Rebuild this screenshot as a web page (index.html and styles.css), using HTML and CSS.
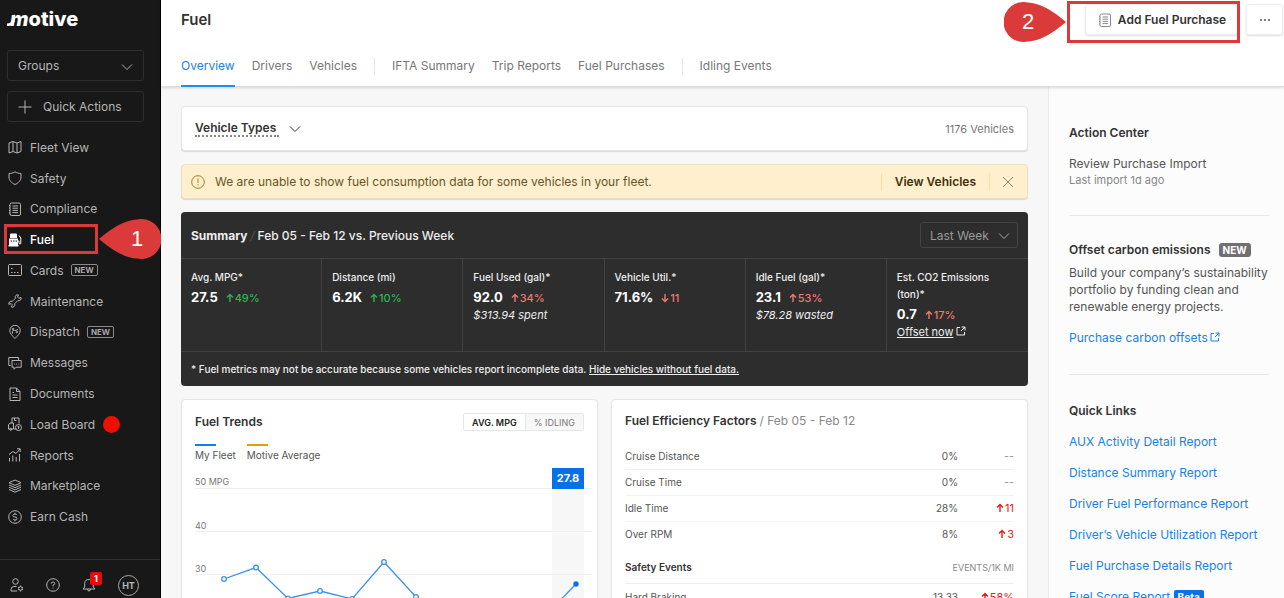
FILE: index.html
```
<!DOCTYPE html>
<html lang="en">

<head>
    <meta charset="UTF-8">
    <meta name="viewport" content="width=device-width, initial-scale=1.0">
    <title>Fuel</title>
    <link rel="stylesheet" href="styles.css">
</head>

<body>
    <svg class="sprite" aria-hidden="true">
        <symbol id="chevron" viewBox="0 0 12 12"><path d="M1 3.500l5 5 5-5" /></symbol>
        <symbol id="up" viewBox="0 0 8 10"><path d="M4 9V1.500M1 4.500l3-3 3 3" /></symbol>
        <symbol id="down" viewBox="0 0 8 10"><path d="M4 1v7.500M1 5.500l3 3 3-3" /></symbol>
        <symbol id="external" viewBox="0 0 10 10"><path d="M4 1.500H1v7.500h7.500V6M5.500 1H9v3.500M9 1L5 5" /></symbol>
        <symbol id="doc" viewBox="0 0 14 14"><rect x="2" y="1" width="10.500" height="12.500" rx="1.500" /><path d="M4.500 4h5.500M4.500 6.200h5.500M4.500 8.400h5.500M4.500 10.600h5.500M1 3.500h1M1 6h1M1 8.500h1M1 11h1" /></symbol>
    </svg>
    <div class="app">
        <div class="sidebar">
            <div class="logo" aria-label="motive">
                <svg class="swoosh" viewBox="0 0 8 14"><path d="M0 11.500c3 0 4-1 5-3L8 2v7c-1.500 3-3.500 5-8 5z" /></svg><em>m</em><span>otive</span>
            </div>
            <label class="picker">
                <select class="groups" aria-label="Groups"><option>Groups</option></select>
                <svg class="chevron"><use href="#chevron" /></svg>
            </label>
            <button class="quick">
                <svg class="icon" viewBox="0 0 14 14"><path d="M7 .5v13M.5 7h13" /></svg>
                Quick Actions
            </button>
            <nav class="menu">
                <a href="#"><svg class="icon" viewBox="0 0 14 14"><path d="M1 3l4-1.500v10L1 13zM5 1.500L9 3v10l-4-1.500M9 3l4-1.500v10L9 13" /></svg>Fleet View</a>
                <a href="#"><svg class="icon" viewBox="0 0 14 14"><path d="M7 .8C5 2 3 2.500 1 2.500V6c0 3.500 2.500 6 6 7.500C10.500 12 13 9.500 13 6V2.500C11 2.500 9 2 7 .8z" /></svg>Safety</a>
                <a href="#"><svg class="icon"><use href="#doc" /></svg>Compliance</a>
                <a class="active" href="#"><svg class="icon" viewBox="0 0 14 14"><path class="solid" d="M2 1.500Q2 .5 3 .5h5q1 0 1 1V5H2z" /><path class="solid" d="M1 5.500h9V12H1zM.5 12h10v1.500H.5z" /><path class="hole" d="M2.500 8h1.500M5 8h1.500M7.500 8H9" /><path d="M10 8h1v2.500q1.200 1 1.800 0V5L11 2.500" /></svg>Fuel
                    <span class="outline"></span>
                    <span class="pin pin-left"><svg viewBox="0 0 62 40"><path d="M0 20Q22 1 38 .5A20 20 0 1 1 38 39.500Q22 39 0 20z" /></svg><b>1</b></span>
                </a>
                <a href="#"><svg class="icon" viewBox="0 0 14 14"><rect x=".5" y="1.500" width="13" height="11" rx="1" /><path d="M3 5.500h1.500M3 9.500h1.500M6 9.500h1.500M9 9.500h1.500" /></svg>Cards <span class="new">NEW</span></a>
                <a href="#"><svg class="icon" viewBox="0 0 14 14"><path d="M13 3.500l-2.200.8-1.200-1.200L10.400.9C8.500.3 6.500 2 7.300 4.300L6.500 5.200 5 6.700 4.300 7.300C2.200 6.600.3 8.500.9 10.400l2.200-.8 1.200 1.200-.8 2.300C5.500 13.700 7.500 12 6.700 9.700l3-3C11.900 7.400 13.700 5.500 13 3.500z" /></svg>Maintenance</a>
                <a href="#"><svg class="icon" viewBox="0 0 14 14"><path d="M7 13.500C4 10.500 1.800 8.500 1.800 5.500a5.200 5.200 0 0 1 10.400 0C12.200 8.500 10 10.500 7 13.500zM4.500 8.500V6.500q0-1.200 1.200-1.200h2.600q1.200 0 1.200-1.300" /><circle cx="5" cy="4" r=".8" /><circle cx="8.800" cy="7" r=".8" /></svg>Dispatch <span class="new">NEW</span></a>
                <a href="#"><svg class="icon" viewBox="0 0 14 14"><path d="M2.800 9.500h-2v-8h9.700V4M4 4.500h9.200v6.700H8L6 13.300v-2.100H4z" /><path d="M6.200 8h.8M8.200 8h.8M10.200 8h.8" /></svg>Messages</a>
                <a href="#"><svg class="icon" viewBox="0 0 14 14"><path d="M2 1h6.500L12 4.500v9H2zM8.500 1v3.500H12M4.500 5.500H6M4.500 8h5M4.500 10.500h5" /></svg>Documents</a>
                <a href="#"><svg class="icon" viewBox="0 0 14 14"><path d="M4 6V1h7v5.500M6.500 1v2.500h2M.5 12V8L2 6h3.500v6h3M.5 12H5" /><circle cx="2.700" cy="12.300" r="1" /><circle cx="10.500" cy="10.500" r="3" /><path d="M10.500 9.200v2.600M9.500 10h2" /></svg>Load Board <span class="dot"></span></a>
                <a href="#"><svg class="icon" viewBox="0 0 14 14"><path d="M1.500 13.500V10M4.800 13.500v-6M8.200 13.500V9M11.500 13.500V6M1 6.500L5 3.500l3 2L12 1M9 .8h3.200V4" /></svg>Reports</a>
                <a href="#"><svg class="icon" viewBox="0 0 14 14"><path d="M7 1l6 2.700-6 2.700-6-2.700zM1 6l6 2.700L13 6M1 8.200l6 2.700 6-2.700M1 10.500l6 2.700 6-2.700" /></svg>Marketplace</a>
                <a href="#"><svg class="icon" viewBox="0 0 14 14"><circle cx="7" cy="7" r="6.300" /><path d="M9 5q-.5-1-2-1-2 0-2 1.500T7 7q2 0 2 1.500T7 10q-1.500 0-2-1M7 2.800V4M7 10v1.200" /></svg>Earn Cash</a>
            </nav>
            <div class="tools">
                <button aria-label="Account settings"><svg class="icon" viewBox="0 0 14 14"><circle cx="5.500" cy="3.500" r="2.800" /><path d="M7 13H1v-1.500Q1 8.500 4 8.500h2.500" /><circle cx="10.500" cy="10.500" r="1.800" /><path d="M10.500 7.500v1.200M10.500 12.300v1.200M7.900 9l1 .6M12.100 11.400l1 .6M7.900 12l1-.6M12.100 9.600l1-.6" /></svg></button>
                <button aria-label="Help"><svg class="icon" viewBox="0 0 14 14"><circle cx="7" cy="7" r="6.300" /><path d="M5.200 5.700Q5.200 4 7 4t1.800 1.500Q8.800 6.500 7 7.200v1M7 9.500v1" /></svg></button>
                <button class="bell" aria-label="Notifications"><svg class="icon" viewBox="0 0 14 14"><path d="M1 11h12L11.300 9V5.500Q11.300 1.500 7 1.500T2.700 5.500V9zM5.500 11q0 2 1.500 2t1.500-2" /></svg><span class="count">1</span></button>
                <button class="avatar">HT</button>
            </div>
        </div>

        <div class="page">
            <header class="header">
                <div class="top">
                    <h1>Fuel</h1>
                    <div class="actions">
                        <button class="add"><svg class="icon"><use href="#doc" /></svg>Add Fuel Purchase</button>
                        <button class="more" aria-label="More"><svg viewBox="0 0 12 4"><circle cx="2" cy="2" r="1" /><circle cx="6" cy="2" r="1" /><circle cx="10" cy="2" r="1" /></svg></button>
                        <span class="outline"></span>
                        <span class="pin pin-right"><svg viewBox="0 0 62 40"><path d="M62 20Q40 1 24 .5A20 20 0 1 0 24 39.500Q40 39 62 20z" /></svg><b>2</b></span>
                    </div>
                </div>
                <nav class="tabs">
                    <a class="active" href="#">Overview</a>
                    <a href="#">Drivers</a>
                    <a href="#">Vehicles</a>
                    <i></i>
                    <a href="#">IFTA Summary</a>
                    <a href="#">Trip Reports</a>
                    <a href="#">Fuel Purchases</a>
                    <i></i>
                    <a href="#">Idling Events</a>
                </nav>
            </header>

            <div class="columns">
                <main class="content">
                    <div class="card filter">
                        <button><span>Vehicle Types</span><svg class="chevron"><use href="#chevron" /></svg></button>
                        <p>1176 Vehicles</p>
                    </div>

                    <div class="notice">
                        <svg class="icon" viewBox="0 0 14 14"><circle cx="7" cy="7" r="6.300" /><path d="M7 3.500v4.500M7 9.300v1.300" /></svg>
                        <p>We are unable to show fuel consumption data for some vehicles in your fleet.</p>
                        <a href="#">View Vehicles</a>
                        <button aria-label="Close"><svg class="icon" viewBox="0 0 14 14"><path d="M2 2l10 10M12 2L2 12" /></svg></button>
                    </div>

                    <section class="summary">
                        <div class="summary-head">
                            <h2>Summary <i>/</i> <span>Feb 05 - Feb 12 vs. Previous Week</span></h2>
                            <label class="picker">
                                <select class="week" aria-label="Period"><option>Last Week</option></select>
                                <svg class="chevron"><use href="#chevron" /></svg>
                            </label>
                        </div>
                        <div class="stats">
                            <div>
                                <h3>Avg. MPG*</h3>
                                <p><b>27.5</b> <span class="good"><svg class="arrow"><use href="#up" /></svg>49%</span></p>
                            </div>
                            <div>
                                <h3>Distance (mi)</h3>
                                <p><b>6.2K</b> <span class="good"><svg class="arrow"><use href="#up" /></svg>10%</span></p>
                            </div>
                            <div>
                                <h3>Fuel Used (gal)*</h3>
                                <p><b>92.0</b> <span class="bad"><svg class="arrow"><use href="#up" /></svg>34%</span></p>
                                <em>$313.94 spent</em>
                            </div>
                            <div>
                                <h3>Vehicle Util.*</h3>
                                <p><b>71.6%</b> <span class="bad"><svg class="arrow"><use href="#down" /></svg>11</span></p>
                            </div>
                            <div>
                                <h3>Idle Fuel (gal)*</h3>
                                <p><b>23.1</b> <span class="bad"><svg class="arrow"><use href="#up" /></svg>53%</span></p>
                                <em>$78.28 wasted</em>
                            </div>
                            <div>
                                <h3>Est. CO2 Emissions<br>(ton)*</h3>
                                <p><b>0.7</b> <span class="bad"><svg class="arrow"><use href="#up" /></svg>17%</span></p>
                                <a href="#">Offset now</a><svg class="external"><use href="#external" /></svg>
                            </div>
                        </div>
                        <p class="footnote">* Fuel metrics may not be accurate because some vehicles report incomplete data. <a href="#">Hide vehicles without fuel data.</a></p>
                    </section>

                    <div class="pair">
                        <section class="card trends">
                            <div class="trends-head">
                                <h2>Fuel Trends</h2>
                                <div class="toggle">
                                    <button class="on">AVG. MPG</button><button>% IDLING</button>
                                </div>
                            </div>
                            <div class="legend">
                                <span class="mine">My Fleet</span>
                                <span class="average">Motive Average</span>
                            </div>
                            <svg class="chart" viewBox="0 0 397 220">
                                <rect class="band" x="357" y="22" width="32" height="198" />
                                <path class="grid" d="M0 21.500h397M0 64.500h397M0 107.500h397M0 150.500h397" />
                                <text class="axis" x="0" y="18">50 MPG</text>
                                <text class="axis" x="0" y="62">40</text>
                                <text class="axis" x="0" y="105">30</text>
                                <path class="line" d="M29 112l32-11.500 32 31 32-7.500 32 8 32-37 32 35 32 25 32 10 32-5 32-10 32-33" />
                                <circle class="point" cx="29" cy="112" r="2.300" />
                                <circle class="point" cx="61" cy="100.500" r="2.300" />
                                <circle class="point" cx="93" cy="131.500" r="2.300" />
                                <circle class="point" cx="125" cy="124" r="2.300" />
                                <circle class="point" cx="157" cy="132" r="2.300" />
                                <circle class="point" cx="189" cy="95" r="2.300" />
                                <circle class="point" cx="221" cy="130" r="2.300" />
                                <circle class="last" cx="381" cy="117" r="2.700" />
                                <rect class="tag" x="357" y="1" width="32" height="21" />
                                <text class="tag-text" x="373" y="15">27.8</text>
                            </svg>
                        </section>

                        <section class="card factors">
                            <h2>Fuel Efficiency Factors <span>/ Feb 05 - Feb 12</span></h2>
                            <table>
                                <tr><td>Cruise Distance</td><td>0%</td><td class="none">--</td></tr>
                                <tr><td>Cruise Time</td><td>0%</td><td class="none">--</td></tr>
                                <tr><td>Idle Time</td><td>28%</td><td><svg class="arrow"><use href="#up" /></svg>11</td></tr>
                                <tr><td>Over RPM</td><td>8%</td><td><svg class="arrow"><use href="#up" /></svg>3</td></tr>
                            </table>
                            <div class="events">
                                <h3>Safety Events</h3>
                                <span>EVENTS/1K MI</span>
                            </div>
                            <table>
                                <tr><td>Hard Braking</td><td>13.33</td><td><svg class="arrow"><use href="#up" /></svg>58%</td></tr>
                            </table>
                        </section>
                    </div>
                </main>

                <aside class="aside">
                    <section>
                        <h2>Action Center</h2>
                        <p>Review Purchase Import</p>
                        <small>Last import 1d ago</small>
                    </section>
                    <section class="offset">
                        <h2>Offset carbon emissions <span class="badge">NEW</span></h2>
                        <p>Build your company’s sustainability portfolio by funding clean and renewable energy projects.</p>
                        <a href="#">Purchase carbon offsets<svg class="external"><use href="#external" /></svg></a>
                    </section>
                    <section class="links">
                        <h2>Quick Links</h2>
                        <a href="#">AUX Activity Detail Report</a>
                        <a href="#">Distance Summary Report</a>
                        <a href="#">Driver Fuel Performance Report</a>
                        <a href="#">Driver’s Vehicle Utilization Report</a>
                        <a href="#">Fuel Purchase Details Report</a>
                        <a href="#">Fuel Score Report <span class="beta">Beta</span></a>
                    </section>
                </aside>
            </div>
        </div>
    </div>
</body>

</html>
```
FILE: styles.css
```
* {
    box-sizing: border-box;
}

body {
    margin: 0;
    font-family: Inter, "Liberation Sans", sans-serif;
    font-size: 12px;
    color: #333;
    overflow: hidden;
}

h1, h2, h3, p {
    margin: 0;
    font-weight: 500;
}

a {
    color: #1a80ea;
    text-decoration: none;
}

button, select {
    font: inherit;
    color: inherit;
    background: none;
    border: 0;
    padding: 0;
    cursor: pointer;
}

svg {
    fill: none;
    stroke: currentColor;
    flex-shrink: 0;
}

.sprite {
    display: none;
}

.icon {
    width: 14px;
    height: 14px;
}

.chevron {
    width: 12px;
    height: 12px;
}

.arrow {
    width: 8px;
    height: 10px;
    margin-right: 1px;
    stroke-width: 1.4;
    vertical-align: -1px;
}

.external {
    width: 10px;
    height: 10px;
    margin-left: 2px;
}

.app {
    display: flex;
    height: 100vh;
}

/* sidebar */

.sidebar {
    display: flex;
    flex-direction: column;
    width: 161px;
    flex-shrink: 0;
    background: #181818;
    border-right: 1px solid #000;
    color: #b5b5b5;
}

.logo {
    display: flex;
    align-items: center;
    height: 50px;
    padding: 0 7px 13px;
    font-size: 20px;
    font-weight: 800;
    color: #fff;
}

.swoosh {
    width: 8px;
    height: 14px;
    fill: #fff;
    stroke: none;
    margin-right: -5px;
}

.picker {
    position: relative;
    display: block;
}

.picker select {
    appearance: none;
    width: 100%;
}

.picker .chevron {
    position: absolute;
    right: 10px;
    top: 50%;
    margin-top: -5px;
    pointer-events: none;
}

.sidebar .picker, .quick {
    width: 137px;
    height: 31px;
    margin: 0 0 10px 7px;
    border: 1px solid #2e2e2e;
    border-radius: 3px;
}

.sidebar .groups {
    height: 29px;
    padding-left: 10px;
}

.quick {
    display: flex;
    align-items: center;
    gap: 11px;
    padding-left: 10px;
}

.menu {
    display: flex;
    flex-direction: column;
    flex: 1;
    padding-bottom: 27px;
}

.menu a {
    position: relative;
    display: flex;
    flex: 1;
    align-items: center;
    padding-left: 8px;
    color: #b5b5b5;
}

.menu .icon {
    margin-right: 8px;
}

.menu a.active {
    color: #fff;
    font-weight: 500;
}

.solid {
    fill: #fff;
    stroke: none;
}

.hole {
    stroke: #181818;
}

.new {
    margin-left: 7px;
    padding: 0 3px;
    border: 1px solid #8a8a8a;
    border-radius: 2px;
    font-size: 8px;
    font-weight: 600;
    line-height: 10px;
}

.dot {
    width: 17px;
    height: 17px;
    margin-left: 8px;
    border-radius: 50%;
    background: #eb1000;
}

.tools {
    display: flex;
    align-items: center;
    justify-content: space-between;
    height: 39px;
    padding: 12px 21px 0 10px;
    border-top: 1px solid #303030;
}

.tools button {
    display: flex;
}

.bell {
    position: relative;
}

.count {
    position: absolute;
    left: 8px;
    top: -6px;
    width: 12px;
    height: 13px;
    border-radius: 2px;
    background: #eb0a0a;
    color: #fff;
    font-size: 9px;
    font-weight: 700;
    line-height: 13px;
}

.tools .avatar {
    display: block;
    width: 21px;
    height: 21px;
    border: 1px solid #aaa;
    border-radius: 50%;
    font-size: 9px;
    font-weight: 700;
}

/* numbered callouts */

.outline {
    position: absolute;
    border: 3px solid #db3a3a;
}

.menu .outline {
    left: 4px;
    top: 0;
    width: 94px;
    height: 30px;
}

.actions .outline {
    left: -18px;
    top: -3px;
    width: 173px;
    height: 42px;
}

.pin {
    position: absolute;
    width: 62px;
    height: 40px;
    color: #fff;
    font: 22px "Liberation Sans", Arial, sans-serif;
}

.pin svg {
    display: block;
    width: 62px;
    height: 40px;
    fill: #db3a3a;
    stroke: none;
}

.pin b {
    position: absolute;
    top: 0;
    width: 40px;
    line-height: 40px;
    text-align: center;
    font-weight: 400;
}

.pin-left {
    left: 99px;
    top: -5px;
    z-index: 1;
}

.pin-left b {
    right: 4px;
}

.pin-right {
    left: -81px;
    top: -2px;
}

.pin-right b {
    left: 4px;
}

/* header */

.page {
    display: flex;
    flex-direction: column;
    flex: 1;
    min-width: 0;
}

.header {
    height: 87px;
    flex-shrink: 0;
    z-index: 1;
    background: #fff;
    border-bottom: 1px solid #dcdcdc;
    box-shadow: 0 1px 3px #0002;
}

.top {
    display: flex;
    justify-content: space-between;
    height: 53px;
    padding: 4px 1px 0 20px;
}

.top h1 {
    font-size: 15px;
    font-weight: 600;
    line-height: 32px;
}

.actions {
    position: relative;
    display: flex;
    gap: 7px;
}

.actions button {
    display: flex;
    align-items: center;
    justify-content: center;
    height: 31px;
    border: 1px solid #eee;
    border-radius: 3px;
    box-shadow: 0 1px 2px #0002;
    font-weight: 600;
}

.add {
    width: 154px;
    gap: 6px;
}

.add .icon {
    color: #888;
}

.more {
    width: 37px;
}

.more svg {
    width: 12px;
    height: 4px;
    fill: #555;
    stroke: none;
}

.tabs {
    display: flex;
    gap: 17px;
    height: 34px;
    padding-left: 20px;
}

.tabs a {
    line-height: 26px;
    color: #777;
}

.tabs a.active {
    color: #1a80ea;
    border-bottom: 2px solid #1a8ff0;
}

.tabs i {
    width: 1px;
    height: 17px;
    margin-top: 5px;
    background: #e5e5e5;
}

/* content */

.columns {
    display: flex;
    flex: 1;
    min-height: 0;
}

.content {
    display: flex;
    flex-direction: column;
    gap: 13px;
    flex: 1;
    min-width: 0;
    padding: 19px 20px 0;
    background: #f7f7f7;
    overflow: hidden;
}

.content > * {
    flex-shrink: 0;
}

.card {
    background: #fff;
    border: 1px solid #e6e6e6;
    border-radius: 4px;
    box-shadow: 0 1px 1px #0002;
}

.card h2 {
    font-size: 12px;
    line-height: 16px;
    font-weight: 600;
}

.filter {
    display: flex;
    align-items: center;
    justify-content: space-between;
    height: 45px;
    padding: 0 13px;
}

.filter button {
    display: flex;
    align-items: center;
    gap: 10px;
    font-weight: 600;
}

.filter button span {
    padding-right: 3px;
    border-bottom: 2px dotted #888;
    line-height: 15px;
}

.filter p {
    color: #777;
    font-size: 11px;
    font-weight: 400;
}

.notice {
    display: flex;
    align-items: center;
    height: 35px;
    padding: 0 12px 0 9px;
    border: 1px solid #ece0c4;
    border-radius: 4px;
    background: #ffefcc;
    box-shadow: 0 1px 1px #0002;
    color: #66552b;
}

.notice > .icon {
    color: #a37c24;
    margin-right: 10px;
}

.notice p {
    flex: 1;
    font-weight: 400;
}

.notice a {
    padding: 0 13px;
    border: solid #ffe09a;
    border-width: 0 1px;
    color: #3f300b;
    font-weight: 600;
    line-height: 18px;
}

.notice button {
    display: flex;
    margin-left: 11px;
    color: #8c8471;
}

.summary {
    background: #2d2d2d;
    border-radius: 4px;
    color: #eee;
}

.summary-head {
    display: flex;
    align-items: center;
    justify-content: space-between;
    height: 46px;
    padding: 0 10px;
}

.summary h2 {
    font-size: 12px;
    font-weight: 700;
}

.summary h2 span {
    font-weight: 500;
}

.summary h2 i {
    color: #555;
    font-weight: 400;
}

.week {
    width: 98px;
    height: 26px;
    padding-left: 9px;
    border: 1px solid #444;
    border-radius: 3px;
    color: #999;
}

.summary .picker {
    width: 98px;
    color: #aaa;
}

.summary .picker .chevron {
    right: 8px;
}

.stats {
    display: grid;
    grid-template-columns: repeat(6, 1fr);
    min-height: 94px;
    border: solid #424242;
    border-width: 1px 0;
    font-size: 11px;
    line-height: 17px;
}

.stats div {
    padding: 10px 9px 0 10px;
    border-right: 1px solid #424242;
}

.stats div:last-child {
    border-right: 0;
}

.stats h3 {
    font-size: 10px;
}

.stats p {
    line-height: 23px;
    margin-bottom: -3px;
}

.stats b {
    font-size: 13px;
    margin-right: 5px;
    color: #fff;
}

.stats a, .footnote a {
    color: inherit;
    text-decoration: underline;
}

.good {
    color: #2fb453;
}

.bad {
    color: #ef7770;
}

.footnote {
    padding: 0 10px;
    font-size: 10px;
    line-height: 34px;
}

.pair {
    display: grid;
    grid-template-columns: 1fr 1fr;
    gap: 13px;
}

.trends {
    padding: 13px 5px 0 13px;
}

.trends-head {
    display: flex;
    align-items: center;
    justify-content: space-between;
    padding-right: 8px;
}

.toggle {
    display: flex;
    border: 1px solid #e6e6e6;
    border-radius: 2px;
    font-size: 9px;
}

.toggle button {
    height: 16px;
    padding: 0 8px;
    background: #f7f7f7;
    color: #777;
}

.toggle .on {
    border-right: 1px solid #e6e6e6;
    background: #fff;
    color: #222;
    font-weight: 600;
}

.legend {
    display: flex;
    gap: 11px;
    margin: 13px 0 3px;
    font-size: 10px;
    line-height: 18px;
    color: #555;
}

.legend span::before {
    content: "";
    display: block;
    width: 21px;
    height: 2px;
    background: #0d7ff0;
}

.legend .average::before {
    background: #e5a000;
}

.chart {
    display: block;
    width: 100%;
    stroke: none;
}

.grid {
    stroke: #eee;
}

.band {
    fill: #f7f7f7;
}

.axis {
    fill: #777;
    font-size: 9px;
}

.line {
    stroke: #3b92f0;
    stroke-width: 1.3;
}

.point {
    fill: #fff;
    stroke: #3b92f0;
    stroke-width: 1.3;
}

.last, .tag {
    fill: #0871e8;
}

.tag-text {
    fill: #fff;
    font-size: 11px;
    font-weight: 700;
    text-anchor: middle;
}

.factors {
    padding: 13px;
}

.factors h2 span {
    color: #888;
    font-weight: 400;
}

.factors table {
    width: 100%;
    border-collapse: collapse;
    font-size: 10px;
    color: #555;
}

.factors h2 + table {
    margin-top: 14px;
}

.factors td {
    height: 26px;
    padding: 0;
    border-bottom: 1px solid #f2f2f2;
}

.factors h2 + table tr:last-child td {
    border-bottom: 0;
}

.factors td + td {
    width: 60px;
    text-align: right;
}

.factors td:last-child {
    width: 56px;
    color: #eb1c10;
    font-size: 11px;
}

.factors td.none {
    color: #999;
}

.events {
    display: flex;
    align-items: center;
    justify-content: space-between;
    height: 37px;
    padding-top: 4px;
    border-bottom: 1px solid #eee;
}

.events h3 {
    font-size: 10px;
    font-weight: 600;
}

.events span {
    font-size: 9px;
    color: #888;
}

/* right column */

.aside {
    width: 236px;
    flex-shrink: 0;
    padding: 37px 15px 0 20px;
    border-left: 1px solid #eaeaea;
    background: #fcfcfc;
    overflow: hidden;
}

.aside section + section {
    margin-top: 26px;
    padding-top: 25px;
    border-top: 1px solid #e8e8e8;
}

.aside h2 {
    font-size: 12px;
    font-weight: 600;
    line-height: 17px;
}

.aside p {
    font-weight: 400;
    line-height: 17px;
    color: #555;
}

.aside section:first-child p {
    margin-top: 14px;
}

.aside small {
    display: block;
    font-size: 11px;
    line-height: 17px;
    color: #888;
}

.offset p {
    margin: 5px 0 14px;
}

.aside a {
    line-height: 17px;
}

.badge {
    margin-left: 5px;
    padding: 1px 4px;
    border-radius: 3px;
    background: #707070;
    color: #fff;
    font-size: 10px;
    font-weight: 700;
}

.aside section.links {
    margin-top: 28px;
    padding-top: 27px;
}

.links a {
    display: block;
    margin-top: 14px;
}

.beta {
    padding: 1px 4px;
    border-radius: 2px;
    background: #0871e8;
    color: #fff;
    font-size: 10px;
    font-weight: 700;
}
```
